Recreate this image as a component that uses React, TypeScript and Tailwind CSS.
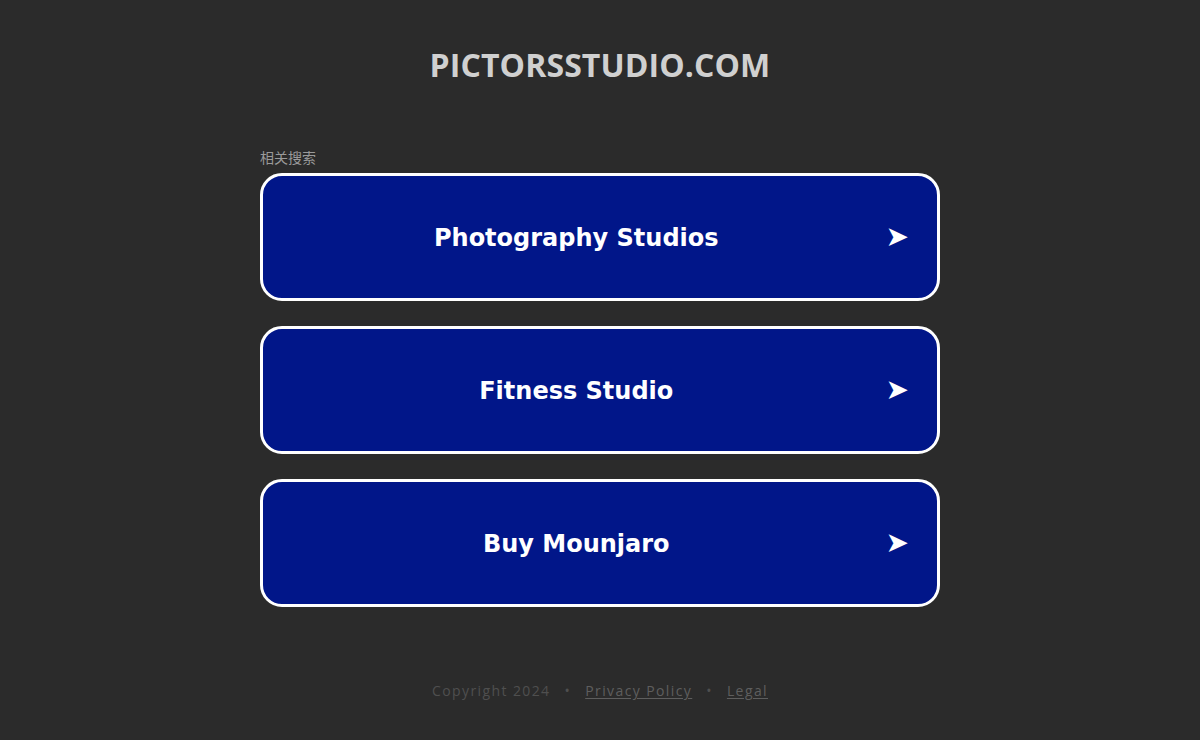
import React from "react";

const items = ["Photography Studios", "Fitness Studio", "Buy Mounjaro"];

export default function App() {
  return (
    <div className="min-h-[740px] w-full bg-[#2b2b2b] flex flex-col items-center">
      <h1
        className="mt-[44px] text-[32px] leading-[42px] font-bold text-[#d0d0d0] tracking-[0.1px]"
        style={{ fontFamily: '"Open Sans", "Noto Sans", sans-serif' }}
      >
        PICTORSSTUDIO.COM
      </h1>
      <div className="w-[680px] mt-[63px]">
        <div
          className="text-[14px] leading-[16px] text-[#9a9a9a] mb-[8px]"
          style={{ fontFamily: '"Noto Sans CJK SC", "Noto Sans", sans-serif' }}
        >
          相关搜索
        </div>
        <div className="flex flex-col gap-[25px]">
          {items.map((t) => (
            <div
              key={t}
              className="h-[128px] rounded-[22px] border-[3px] border-white bg-[#011689] flex items-center"
            >
              <span
                className="flex-1 text-center text-white font-bold text-[24px] leading-[30px] pt-[2px] pl-[4px]"
                style={{ fontFamily: '"DejaVu Sans", Verdana, sans-serif' }}
              >
                {t}
              </span>
              <span
                className="text-white text-[28px] leading-[30px] pr-[28px]"
                style={{ fontFamily: '"DejaVu Sans", sans-serif' }}
              >
                ➤
              </span>
            </div>
          ))}
        </div>
      </div>
      <div
        className="mt-[73px] text-[14px] text-[#4f4f4f] tracking-[1.4px] flex items-center gap-[14px]"
        style={{ fontFamily: '"Open Sans", "Noto Sans", sans-serif' }}
      >
        <span>Copyright 2024</span>
        <span>•</span>
        <span className="underline underline-offset-2 text-[#5e5e5e]">Privacy Policy</span>
        <span>•</span>
        <span className="underline underline-offset-2 text-[#5e5e5e]">Legal</span>
      </div>
    </div>
  );
}
